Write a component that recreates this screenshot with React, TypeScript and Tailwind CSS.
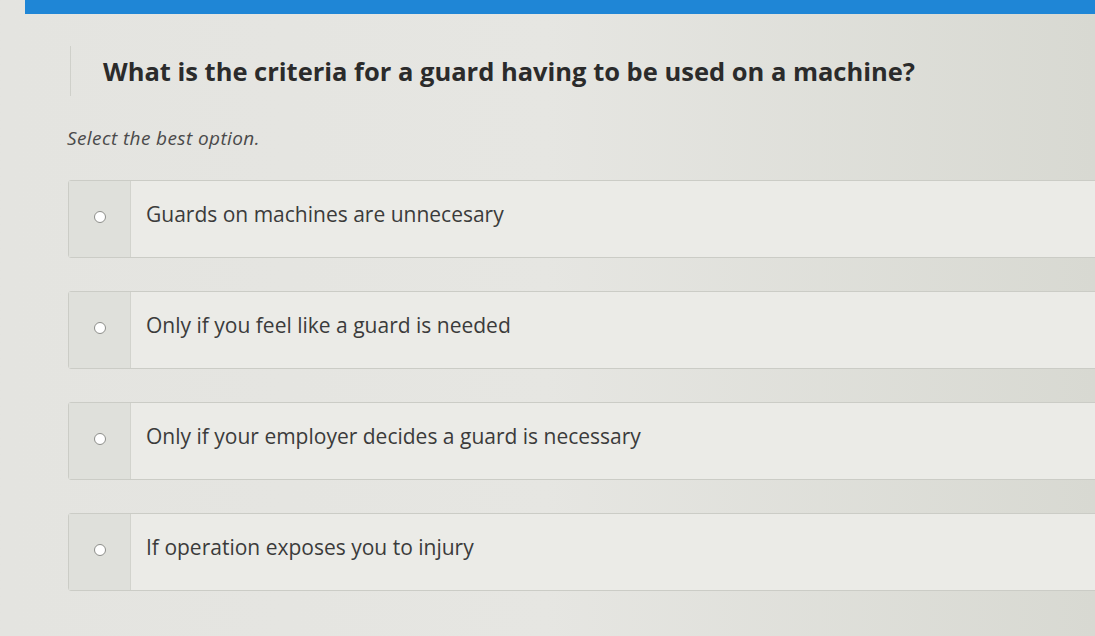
import React from 'react';

const options = [
  'Guards on machines are unnecesary',
  'Only if you feel like a guard is needed',
  'Only if your employer decides a guard is necessary',
  'If operation exposes you to injury',
];

function OptionRow({ label }: { label: string }) {
  return (
    <label className="flex h-[78px] w-[1060px] cursor-pointer rounded-l-[3px] border border-[#cbccc6] bg-[#ebebe7]">
      {/* radio column */}
      <div className="flex w-[62px] shrink-0 items-center justify-center border-r border-[#d2d3cd] bg-[#dfe0db] pb-[4px]">
        <span className="block h-[12px] w-[12px] rounded-full border-[1.5px] border-[#8d8e8a] bg-white" />
      </div>
      <div className="flex items-center pb-[8px] pl-[15px] text-[21px] text-[#3b3b3b]">
        {label}
      </div>
    </label>
  );
}

export default function App() {
  return (
    <div
      className="h-[636px] w-[1095px] overflow-hidden bg-gradient-to-r from-[#e4e4e0] via-[#e6e6e2] to-[#d8d9d2]"
      style={{ fontFamily: '"Open Sans", "Liberation Sans", sans-serif' }}
    >
      {/* top app bar */}
      <div className="ml-[25px] h-[14px] bg-[#1f86d6]" />

      {/* question */}
      <div className="ml-[70px] mt-[32px] flex h-[50px] items-center border-l border-[#cfd0ca] pl-[32px]">
        <h1 className="text-[25.5px] font-bold text-[#2b2b2b]">
          What is the criteria for a guard having to be used on a machine?
        </h1>
      </div>

      <p className="ml-[67px] mt-[28px] text-[19px] italic tracking-[0.4px] text-[#4a4a4a]">
        Select the best option.
      </p>

      {/* answer list */}
      <div className="ml-[68px] mt-[27px] flex flex-col gap-[33px]">
        {options.map((o) => (
          <OptionRow key={o} label={o} />
        ))}
      </div>
    </div>
  );
}
